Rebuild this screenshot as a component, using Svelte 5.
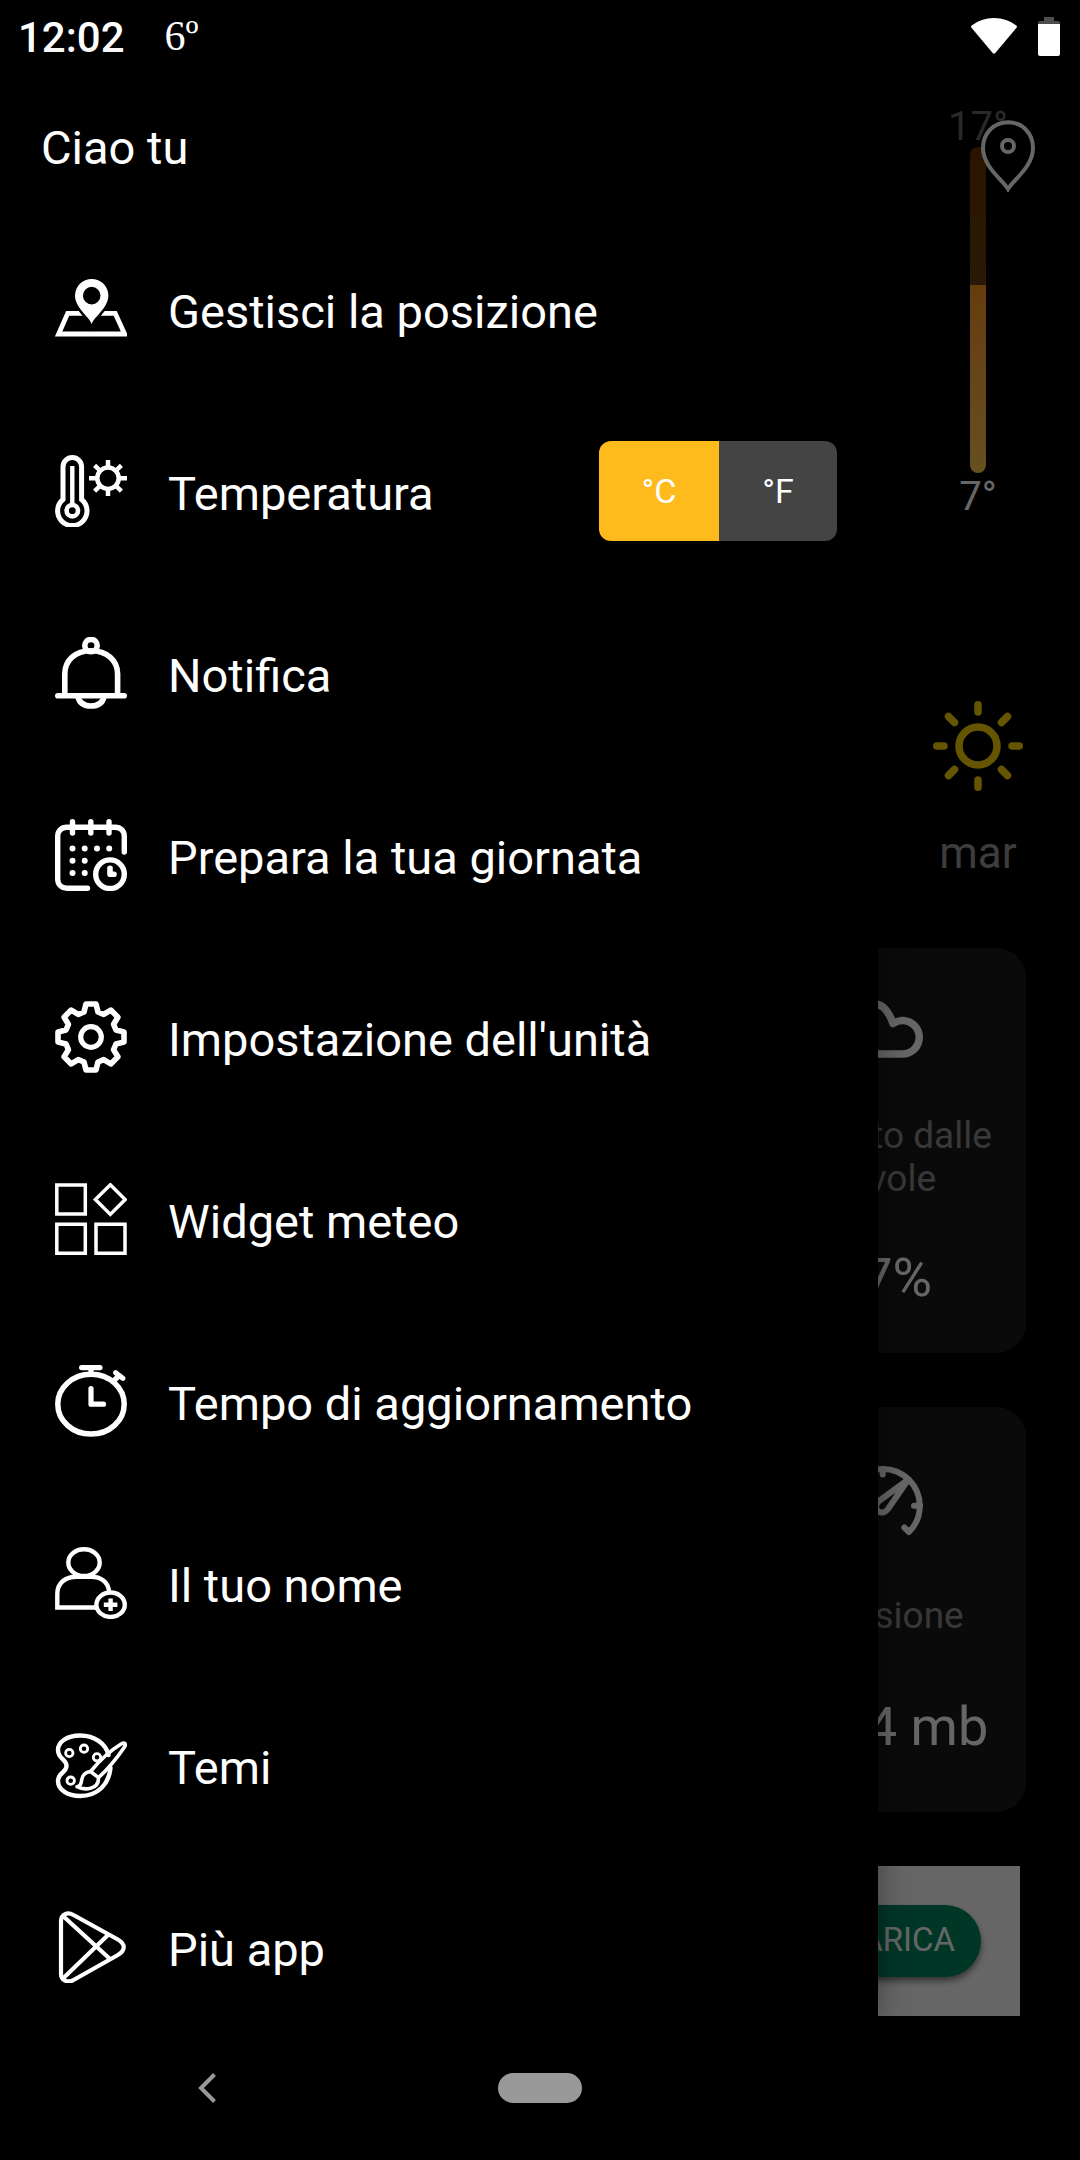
<script lang="ts">
  interface MenuItem {
    id: string;
    label: string;
  }

  const menu: MenuItem[] = [
    { id: 'location', label: 'Gestisci la posizione' },
    { id: 'temperature', label: 'Temperatura' },
    { id: 'bell', label: 'Notifica' },
    { id: 'calendar', label: 'Prepara la tua giornata' },
    { id: 'gear', label: "Impostazione dell'unità" },
    { id: 'widgets', label: 'Widget meteo' },
    { id: 'stopwatch', label: 'Tempo di aggiornamento' },
    { id: 'user', label: 'Il tuo nome' },
    { id: 'palette', label: 'Temi' },
    { id: 'play', label: 'Più app' }
  ];

  const units = ['°C', '°F'];
  let unit = $state('°C');

  // eight teeth, each one four points rotated around the centre
  const tooth = [[-7, -25], [-5, -33], [5, -33], [7, -25]];

  function gearPath() {
    const points: string[] = [];
    for (let i = 0; i < 8; i++) {
      const a = (i * Math.PI) / 4;
      for (const [x, y] of tooth) {
        const px = 36 + x * Math.cos(a) - y * Math.sin(a);
        const py = 36 + x * Math.sin(a) + y * Math.cos(a);
        points.push(`${px.toFixed(1)} ${py.toFixed(1)}`);
      }
    }
    return `M${points.join('L')}Z`;
  }
</script>

{#snippet icon(id: string)}
  <svg class="icon" viewBox="0 0 72 72" aria-hidden="true">
    {#if id === 'location'}
      <path d="M28 40.3H12.7L3.6 61H69.6L60.2 40.3H45.5" stroke-width="4.8" />
      <path class="gap" d="M36.7 51C34 43.5 20 35 20 22.6a16.7 16.7 0 0 1 33.4 0C53.4 35 39.4 43.5 36.7 51Z" />
      <path class="solid" fill-rule="evenodd" d="M36.7 51C34 43.5 20 35 20 22.6a16.7 16.7 0 0 1 33.4 0C53.4 35 39.4 43.5 36.7 51ZM36.7 13.8a8.8 8.8 0 1 0 0 17.6a8.8 8.8 0 0 0 0-17.6Z" />
    {:else if id === 'temperature'}
      <path d="M8 44.5V11.8a9.3 9.3 0 0 1 18.6 0V44.5A14.7 14.7 0 1 1 8 44.5Z" stroke-width="5" />
      <circle cx="17.3" cy="55.7" r="5.7" stroke-width="4.6" />
      <path d="M17.3 11V51" stroke-width="4.4" />
      <circle cx="53" cy="23.2" r="10.7" stroke-width="4.5" />
      <path d="M53 5V13M53 33V41M34 23.2H43M63 23.2H72M39.6 10.3L46 16.5M60 30L66.4 36.2M66.4 10.3L60 16.5M46 30L39.6 36.2" stroke-width="4.5" />
    {:else if id === 'bell'}
      <g stroke-width="5.6" stroke-linecap="round">
        <circle cx="36" cy="8.6" r="6.2" />
        <path d="M9.8 58V37C9.8 23 20.5 13.8 36 13.8S62.6 23 62.6 37V58" />
        <path d="M2.8 58.7H69.2" />
        <path d="M23 60C24.5 66 29 69 36 69S47.5 66 49 60" />
      </g>
    {:else if id === 'calendar'}
      <g stroke-width="5.4" stroke-linecap="round">
        <path d="M32.5 69.2H12C6 69.2 2.7 65 2.7 60V17.5C2.7 12 6 8.2 12 8.2H60C66 8.2 69.3 12 69.3 17.5V33" />
        <path d="M17.5 2.7V14M35.8 2.7V14M54 2.7V14" />
        <circle cx="55" cy="55.2" r="14.3" />
      </g>
      <path d="M55 49.2V55.3H59" stroke-width="5.6" stroke-linecap="round" stroke-linejoin="round" />
      <path d="M17.5 29.6h.01M29.7 29.6h.01M42 29.6h.01M54.2 29.6h.01M17.5 41.8h.01M29.7 41.8h.01M17.5 54h.01M29.7 54h.01" stroke-width="6" stroke-linecap="round" />
    {:else if id === 'gear'}
      <path d={gearPath()} stroke-width="5.6" stroke-linejoin="round" />
      <circle cx="36" cy="36" r="10.3" stroke-width="5.2" />
    {:else if id === 'widgets'}
      <g stroke-width="3.5">
        <path d="M1.8 2H30.3V31H1.8ZM1.8 41.3H30.3V70.2H1.8ZM41 41.3H70V70.2H41Z" />
        <path d="M55.3 1.8L70.2 16.6L55.3 31.4L40.4 16.6Z" />
      </g>
    {:else if id === 'stopwatch'}
      <ellipse cx="36" cy="39.2" rx="33.2" ry="29.9" stroke-width="5.5" />
      <g stroke-width="5.2" stroke-linecap="round" stroke-linejoin="round">
        <path d="M26.6 2.6H45M36 3V8M36 23.5V39.2H48.5" />
        <path d="M60.7 7.7L67.8 13.3M64.3 10.5L58.5 16" />
      </g>
    {:else if id === 'user'}
      <g stroke-width="4.4">
        <ellipse cx="29" cy="15.6" rx="15.7" ry="13.4" />
        <path d="M41 60.5H2.3V47C2.3 36 10 29.7 22 29.7H36C46 29.7 53 35 54 44" />
        <ellipse cx="55.6" cy="57.7" rx="14.2" ry="12.2" />
        <path d="M48.8 57.7H62.4M55.6 51.5V63.9" />
      </g>
    {:else if id === 'palette'}
      <g stroke-width="4.4" stroke-linejoin="round" stroke-linecap="round">
        <path d="M53.5 26C51 15 40 6.5 25 6.5C12 6.5 3 13 3 21C3 30 11.5 30 11.5 37C11.5 44 3 43 3 52C3 61 13 67 25 67C43 67 54 55 55.5 39" />
        <path d="M35.5 42.5C45 31 56 21 66.5 14.7C69.5 13 71.5 15 69.5 18C62 29 53 40 43.5 48.7ZM35.5 42.5C28 43.5 27 48 26.5 52C26 56 24 57.5 22 57.7C29 61.5 44 61 43.5 48.7" stroke-width="3.6" />
      </g>
      <g stroke-width="2.8">
        <circle cx="14.3" cy="24" r="3.7" />
        <circle cx="29" cy="19.7" r="3.7" />
        <circle cx="42" cy="28.3" r="3.7" />
        <circle cx="15.7" cy="51.7" r="3.7" />
      </g>
    {:else}
      <g stroke-width="4.2" stroke-linejoin="round">
        <path d="M6 10C6 3 12.5 .5 18.5 4L62 28C71 33 71 39.5 62 44.5L18.5 69C12.5 72.5 6 69 6 63Z" />
        <path d="M8 5L55 48M8 67.5L53 24" />
      </g>
    {/if}
  </svg>
{/snippet}

<div class="screen">
  <div class="status-bar">
    <time>12:02</time>
    <span class="status-temp">6º</span>
    <div class="status-icons">
      <svg class="wifi" viewBox="0 0 46 36" aria-label="Wi-Fi">
        <path d="M.7 7.5Q10 0 23 0T45.3 7.5Q46.5 8.5 45.5 9.8L24.3 35Q23 36.5 21.7 35L.5 9.8Q-.5 8.5 .7 7.5Z" fill="#fff" />
      </svg>
      <svg class="battery" viewBox="0 0 22 39" aria-label="Batteria">
        <path d="M6 0H16V4H20Q22 4 22 6V8H0V6Q0 4 2 4H6Z" fill="#4d4d4d" />
        <path d="M0 7H22V37Q22 39 20 39H2Q0 39 0 37Z" fill="#fff" />
      </svg>
    </div>
  </div>

  <main>
    <section class="weather">
      <div class="day">
        <span class="degrees past">17°</span>
        <div class="range">
          <div class="range-past"></div>
          <div class="range-next"></div>
        </div>
        <span class="degrees">7°</span>
        <svg class="sun" viewBox="0 0 90 90" aria-hidden="true">
          <circle cx="45" cy="45" r="19" />
          <path d="M45 3.8V11M45 79V86.2M3.8 45H11M79 45H86.2M15.5 15.5L21.5 21.5M68.5 68.5L74.5 74.5M74.5 15.5L68.5 21.5M21.5 68.5L15.5 74.5" />
        </svg>
        <span class="day-name">mar</span>
      </div>

      <div class="cards">
        <article class="card">
          <svg class="card-icon" viewBox="0 0 98 74" aria-hidden="true">
            <path d="M26 62H69.5A16.7 16.7 0 0 0 69.5 28.5Q65 28.5 60 31.5C56 20 50 11.5 40 11.5C30 11.5 22 20 20 31C13 32 9 38 9 46.5C9 55 16 62 26 62Z" />
          </svg>
          <h2>Coperto dalle nuvole</h2>
          <p>97%</p>
        </article>
        <article class="card">
          <svg class="card-icon gauge" viewBox="0 0 98 74" aria-hidden="true">
            <path d="M28 65L23.500 70A37 37 0 1 1 76 70L71.300 65.500" />
            <path d="M49.700 7V12.500M87 43.700H81M12.500 43.700H18.500" />
            <path d="M75.300 17.500L46 39C38 46 48 56 55 47Z" />
          </svg>
          <h2>Pressione</h2>
          <p>1014 mb</p>
        </article>
      </div>

      <div class="ad">
        <button type="button" class="download">SCARICA</button>
      </div>

      <button type="button" class="pin" aria-label="Posizione">
        <svg viewBox="0 0 54 72" aria-hidden="true">
          <path d="M27 69C22 60 2 47 2 28C2 13 13 2.2 27 2.2S52 13 52 28C52 47 32 60 27 69Z" />
          <circle cx="27" cy="26" r="6" />
        </svg>
      </button>
    </section>

    <div class="scrim"></div>

    <aside class="drawer">
      <h1>Ciao tu</h1>
      <ul>
        {#each menu as item (item.id)}
          <li>
            <button type="button" class="item">
              {@render icon(item.id)}
              <span>{item.label}</span>
            </button>
            {#if item.id === 'temperature'}
              <div class="units">
                {#each units as u (u)}
                  <button
                    type="button"
                    class:active={unit === u}
                    aria-pressed={unit === u}
                    onclick={() => (unit = u)}>{u}</button>
                {/each}
              </div>
            {/if}
          </li>
        {/each}
      </ul>
    </aside>
  </main>

  <nav>
    <button type="button" class="back" aria-label="Indietro">
      <svg viewBox="0 0 18 30" aria-hidden="true">
        <path d="M16.5 1.5L3 15L16.5 28.5" />
      </svg>
    </button>
    <button type="button" class="home" aria-label="Home"></button>
    <span></span>
  </nav>
</div>

<style>
  :global(body) {
    margin: 0;
    background: #000;
  }

  .screen {
    display: flex;
    flex-direction: column;
    min-height: 100vh;
    background: #000;
    color: #fff;
    font-family: Roboto, 'Noto Sans', sans-serif;
    overflow: hidden;
  }

  button {
    margin: 0;
    padding: 0;
    border: none;
    background: none;
    color: inherit;
    font: inherit;
    cursor: pointer;
  }

  h1, h2, p, ul {
    margin: 0;
    padding: 0;
    font-weight: 400;
  }

  svg {
    display: block;
    fill: none;
    stroke: none;
  }

  .status-bar {
    display: flex;
    align-items: center;
    height: 72px;
    padding: 0 20px 0 18px;
  }

  time {
    padding-top: 3px;
    font-size: 42px;
    font-weight: 500;
    line-height: 50px;
  }

  .status-temp {
    margin-left: 40px;
    font-family: 'Liberation Serif', serif;
    font-size: 42px;
    line-height: 50px;
  }

  .status-icons {
    display: flex;
    align-items: center;
    gap: 21px;
    margin-left: auto;
  }

  .wifi {
    width: 46px;
    height: 36px;
  }

  .battery {
    width: 22px;
    height: 39px;
  }

  main {
    position: relative;
    flex: 1;
  }

  .day {
    display: flex;
    flex-direction: column;
    align-items: center;
    width: 204px;
    margin-left: auto;
    padding-top: 31px;
  }

  .degrees {
    padding-top: 4px;
    font-size: 40px;
    line-height: 40px;
  }

  .past {
    color: #666;
  }

  .range {
    width: 16px;
    height: 326px;
    border-radius: 8px;
    overflow: hidden;
  }

  .range-past {
    height: 138px;
    background: linear-gradient(#693300, #694014);
  }

  .range-next {
    height: 188px;
    background: linear-gradient(#ff9626, #ffc84d);
  }

  .sun {
    width: 90px;
    height: 90px;
    margin: 184px 0 36px;
    stroke: #ffd500;
    stroke-width: 7.5;
    stroke-linecap: round;
  }

  .day-name {
    color: #999;
    font-size: 44px;
    line-height: 52px;
  }

  .cards {
    display: grid;
    grid-template-columns: repeat(3, 1fr);
    gap: 54px;
    padding: 69px 54px 54px;
  }

  .card {
    grid-column: 3;
    display: flex;
    flex-direction: column;
    align-items: center;
    justify-content: space-evenly;
    height: 405px;
    border-radius: 30px;
    background: #1b1b1b;
    text-align: center;
  }

  .card-icon {
    width: 98px;
    height: 74px;
    stroke: #fff;
    stroke-width: 7.5;
    stroke-linecap: round;
    stroke-linejoin: round;
  }

  .gauge {
    stroke-width: 6;
  }

  .card h2 {
    padding-top: 4px;
    color: #8c8c8c;
    font-size: 37px;
    line-height: 43px;
  }

  .card p {
    padding-top: 4px;
    font-size: 54px;
    line-height: 62px;
  }

  .ad {
    display: flex;
    align-items: center;
    justify-content: flex-end;
    height: 150px;
    margin: 0 60px;
    background: #fff;
  }

  .download {
    height: 72px;
    margin-right: 39px;
    padding: 0 26px 3px;
    border-radius: 36px;
    background: #00875f;
    box-shadow: 0 4px 6px rgba(0, 0, 0, 0.5);
    font-size: 33px;
  }

  .pin {
    position: absolute;
    top: 48px;
    right: 45px;
  }

  .pin svg {
    width: 54px;
    height: 72px;
    stroke: #fff;
    stroke-width: 4;
  }

  .scrim {
    position: absolute;
    inset: 0;
    background: rgba(0, 0, 0, 0.6);
  }

  .drawer {
    position: absolute;
    top: 0;
    bottom: 0;
    left: 0;
    box-sizing: border-box;
    width: 81.3%;
    padding: 48px 41px 0;
    background: #000;
    box-shadow: 0 0 30px rgba(0, 0, 0, 0.4);
  }

  h1 {
    font-size: 47px;
    line-height: 56px;
  }

  ul {
    display: flex;
    flex-direction: column;
    gap: 72px;
    margin-top: 78px;
    list-style: none;
  }

  li {
    display: flex;
    align-items: center;
    height: 110px;
    padding-left: 14px;
  }

  .item {
    display: flex;
    flex: 1;
    align-items: center;
    gap: 41px;
    font-size: 47px;
    line-height: 56px;
    text-align: left;
    white-space: nowrap;
  }

  .item span {
    padding-top: 5px;
  }

  .icon {
    flex: none;
    width: 72px;
    height: 72px;
    stroke: #fff;
  }

  .solid {
    fill: #fff;
    stroke: none;
  }

  .gap {
    fill: #000;
    stroke: #000;
    stroke-width: 5;
  }

  .units {
    display: flex;
    height: 100px;
    border-radius: 12px;
    overflow: hidden;
  }

  .units button {
    width: 118px;
    background: #444;
    font-size: 34px;
  }

  .units .active {
    width: 120px;
    background: #ffbb1c;
  }

  nav {
    display: grid;
    grid-template-columns: 1fr 84px 1fr;
    align-items: center;
    justify-items: center;
    height: 144px;
  }

  .back {
    padding: 30px;
    margin-right: 84px;
  }

  .back svg {
    width: 18px;
    height: 30px;
    stroke: #999;
    stroke-width: 4;
  }

  .home {
    width: 84px;
    height: 30px;
    border-radius: 15px;
    background: #999;
  }
</style>
